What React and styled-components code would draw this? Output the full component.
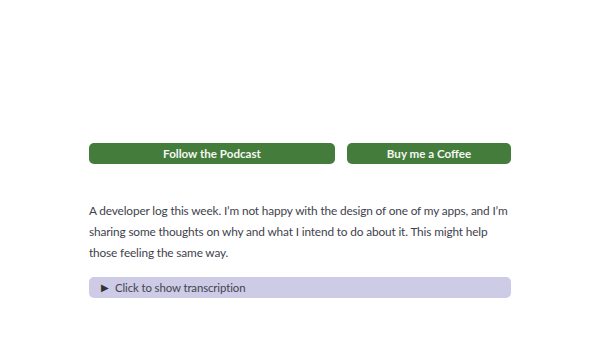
import React from 'react';
import styled, { createGlobalStyle } from 'styled-components';

const GlobalStyle = createGlobalStyle`
  html, body {
    margin: 0;
    padding: 0;
    background: #ffffff;
  }
  body {
    font-family: Lato, "Noto Sans", sans-serif;
  }
`;

const Page = styled.div`
  width: 600px;
  height: 338px;
  overflow: hidden;
  padding-top: 143px;
  box-sizing: border-box;
`;

const Column = styled.div`
  width: 422px;
  margin: 0 auto;
`;

const ButtonRow = styled.div`
  display: flex;
  gap: 12px;
`;

const LinkButton = styled.a`
  flex: ${props => props.grow};
  height: 21px;
  display: flex;
  align-items: center;
  justify-content: center;
  background-color: #447c3c;
  color: #f4f7f2;
  font-size: 11.6px;
  font-weight: 700;
  border-radius: 5px;
  text-decoration: none;
`;

const Description = styled.p`
  margin: 36px 0 0;
  color: #423f4d;
  font-size: 11.85px;
  letter-spacing: -0.15px;
  line-height: 21.2px;
`;

const Transcript = styled.details`
  margin-top: 13px;
  background-color: #cdcbe6;
  border-radius: 5px;
`;

const Summary = styled.summary`
  height: 21px;
  display: flex;
  align-items: center;
  gap: 6px;
  padding-left: 12px;
  color: #45434f;
  font-size: 11.4px;
  letter-spacing: -0.1px;
  list-style: none;
  cursor: pointer;

  &::-webkit-details-marker {
    display: none;
  }
`;

const Arrow = styled.span`
  font-size: 10px;
  color: #333;
`;

const App = () => {
  return (
    <>
      <GlobalStyle />
      <Page>
        <Column>
          <ButtonRow>
            <LinkButton grow={3} href="#">Follow the Podcast</LinkButton>
            <LinkButton grow={2} href="#">Buy me a Coffee</LinkButton>
          </ButtonRow>

          <Description>
            A developer log this week. I’m not happy with the design of one of my apps, and I’m
            sharing some thoughts on why and what I intend to do about it. This might help
            those feeling the same way.
          </Description>

          <Transcript>
            <Summary>
              <Arrow>▶</Arrow>
              Click to show transcription
            </Summary>
          </Transcript>
        </Column>
      </Page>
    </>
  );
};

export default App;
